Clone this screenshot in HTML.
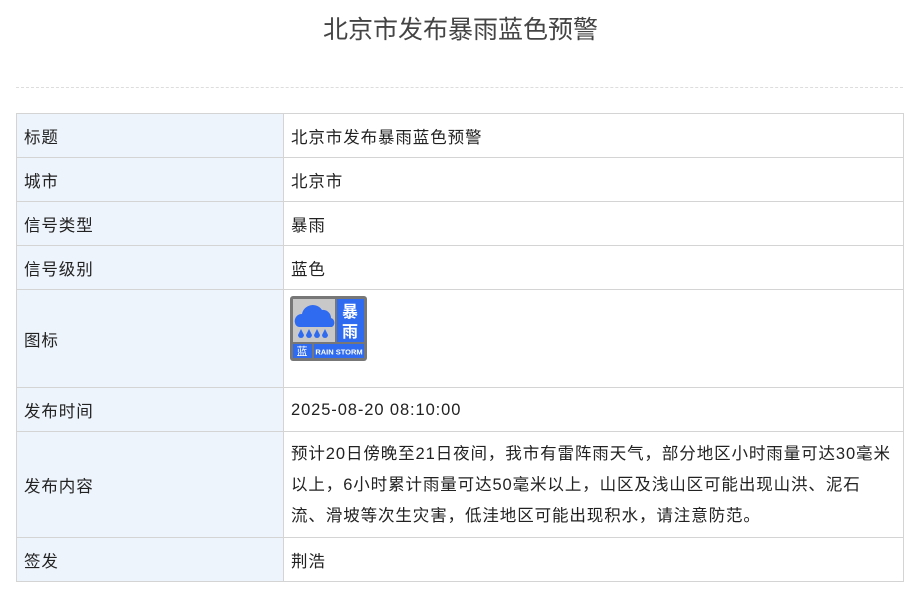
<!DOCTYPE html>
<html><head><meta charset="utf-8"><style>
body{margin:0;background:#fff;font-family:"Liberation Sans","Noto Sans CJK SC",sans-serif;color:#222;}
h1{margin:0;position:absolute;top:13px;left:0;width:921px;text-align:center;font-size:25px;font-weight:normal;color:#444;line-height:34px;}
.hr{position:absolute;left:16px;top:87px;width:887px;border-top:1px dashed #ddd;}
table{position:absolute;left:16px;top:113px;width:888px;border-collapse:collapse;font-size:16.5px;letter-spacing:0.9px;}
td{border:1px solid #d4d4d4;padding:0 7px;height:43px;vertical-align:middle;}
td.k{background:#eef4fc;width:252px;}
</style></head><body>
<h1>北京市发布暴雨蓝色预警</h1>
<div class="hr"></div>
<table>
<tr><td class="k">标题</td><td>北京市发布暴雨蓝色预警</td></tr>
<tr><td class="k">城市</td><td>北京市</td></tr>
<tr><td class="k">信号类型</td><td>暴雨</td></tr>
<tr><td class="k">信号级别</td><td>蓝色</td></tr>
<tr><td class="k" style="height:97px">图标</td><td>
<svg width="80" height="68" viewBox="0 0 80 68" style="display:block;margin-top:-20px;margin-left:-2px">
<rect x="1" y="1" width="77" height="65" rx="3" fill="#777"/>
<rect x="4" y="4" width="42" height="43" fill="#c8c8c8"/>
<rect x="48" y="4" width="27" height="43" fill="#2f6bf0"/>
<rect x="4" y="49" width="19" height="14" fill="#2f6bf0"/>
<rect x="25" y="49" width="50" height="14" fill="#2f6bf0"/>
<path d="M6 28 a7 7 0 0 1 7-9 a11 11 0 0 1 20-4 a8 8 0 0 1 9 8 a5 5 0 0 1 1 9 H10 a5 5 0 0 1-4-4z" fill="#2f6bf0"/>
<g fill="#2f6bf0"><path d="M12 34 l-3 6 a3 3 0 0 0 6 0z"/><path d="M20 34 l-3 6 a3 3 0 0 0 6 0z"/><path d="M28 34 l-3 6 a3 3 0 0 0 6 0z"/><path d="M36 34 l-3 6 a3 3 0 0 0 6 0z"/></g>
<text x="61.5" y="22" font-size="16" font-weight="bold" fill="#fff" text-anchor="middle" font-family="Noto Sans CJK SC">暴</text>
<text x="61.5" y="42" font-size="16" font-weight="bold" fill="#fff" text-anchor="middle" font-family="Noto Sans CJK SC">雨</text>
<text x="13.5" y="60" font-size="11" fill="#fff" text-anchor="middle" font-family="Noto Sans CJK SC">蓝</text>
<text x="50" y="59.5" font-size="7.5" fill="#fff" font-weight="bold" text-anchor="middle" letter-spacing="0">RAIN STORM</text>
</svg></td></tr>
<tr><td class="k">发布时间</td><td style="padding-top:2px;height:41px">2025-08-20 08:10:00</td></tr>
<tr><td class="k" style="height:105px">发布内容</td><td style="line-height:31px;padding-top:4px;padding-bottom:2px;height:99px;white-space:nowrap">预计20日傍晚至21日夜间，我市有雷阵雨天气，部分地区小时雨量可达30毫米<br>以上，6小时累计雨量可达50毫米以上，山区及浅山区可能出现山洪、泥石<br>流、滑坡等次生灾害，低洼地区可能出现积水，请注意防范。</td></tr>
<tr><td class="k">签发</td><td>荆浩</td></tr>
</table>
</body></html>
